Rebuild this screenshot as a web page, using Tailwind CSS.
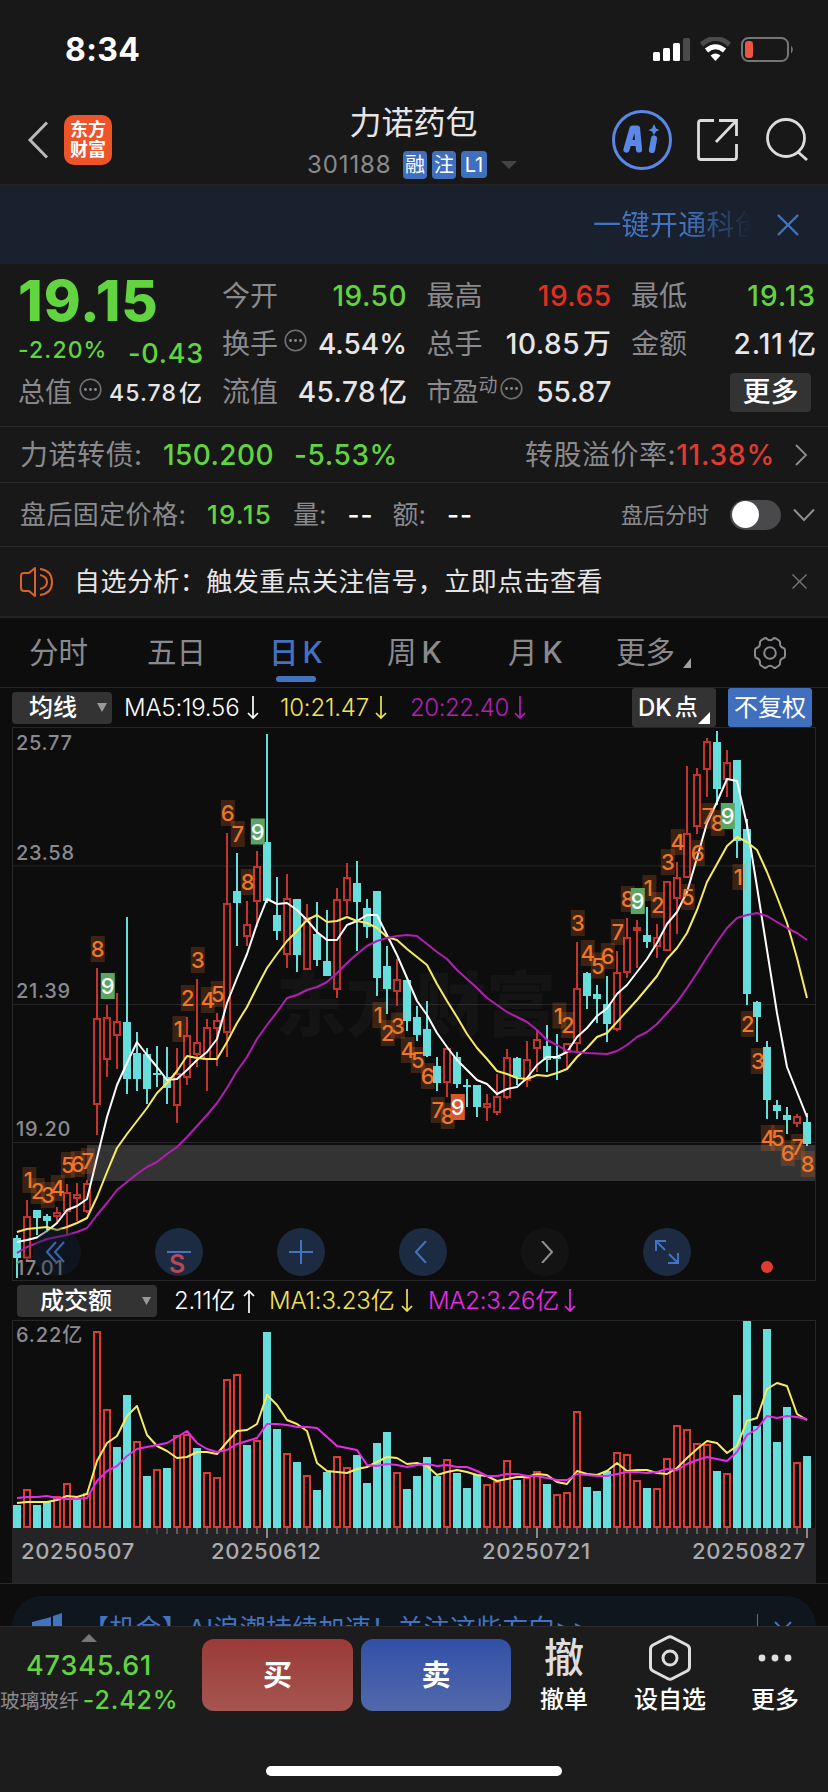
<!DOCTYPE html>
<html lang="zh-CN">
<head>
<meta charset="utf-8">
<title>力诺药包 301188</title>
<script src="https://cdn.jsdelivr.net/npm/@tailwindcss/browser@4"></script>
</head>
<body class="w-[828px] h-[1792px] overflow-hidden bg-[#0d0d0d] font-[Inter,'Noto_Sans_CJK_SC',sans-serif] leading-none text-[#e6e6e8] whitespace-nowrap">
<div class="flex h-[1792px] w-[828px] flex-col overflow-hidden">

  <!-- status bar -->
  <header class="h-[186px] shrink-0 border-b-2 border-[#242424] bg-[#181818]">
    <div class="flex h-[100px] items-center justify-between pl-[65px] pr-[33px]">
      <span class="text-[32px] font-bold tracking-[0.4px] text-white">8:34</span>
      <svg width="142" height="26" viewBox="0 0 142 26">
        <g fill="#fff"><rect x="0" y="15" width="7" height="9" rx="1.5"/><rect x="10" y="11" width="7" height="13" rx="1.5"/><rect x="20" y="6" width="7" height="18" rx="1.5"/></g>
        <rect x="30" y="1" width="7" height="23" rx="1.5" fill="#4a4a4a"/>
        <path d="M48.500 7.500Q62.500-4.500 76.500 7.500" fill="none" stroke="#4a4a4a" stroke-width="5"/>
        <path d="M53.500 13.500Q62.500 6 71.500 13.500" fill="none" stroke="#fff" stroke-width="5"/>
        <path d="M57.500 18.500Q62.500 14.500 67.500 18.500L62.500 24Z" fill="#fff"/>
        <rect x="89" y="1" width="46" height="23" rx="6.500" fill="none" stroke="#757575" stroke-width="2"/>
        <rect x="92" y="4" width="8" height="17" rx="3" fill="#eb5545"/>
        <path d="M138 8.500Q141.500 12.500 138 16.500Z" fill="#757575"/>
      </svg>
    </div>
    <!-- navigation -->
    <div class="flex h-[84px] items-start">
      <div class="flex h-[80px] w-[307px] items-center pl-[27px]">
        <svg width="22" height="38" viewBox="0 0 22 38" fill="none" stroke="#b9b9b9" stroke-width="3"><path d="M20 1.500L3 19L20 36.500"/></svg>
        <div class="ml-[15px] flex h-[50px] w-[48px] flex-col items-center justify-center gap-[2px] rounded-[10px] bg-[#ee5428] text-[18px] font-bold text-white"><span>东方</span><span>财富</span></div>
      </div>
      <div class="flex w-[213px] flex-col items-center">
        <h1 class="mt-[7px] text-[32px]">力诺药包</h1>
        <div class="mt-[12px] flex h-[28px] w-full items-center">
          <span class="w-[96px] text-[24px] tracking-[0.9px] text-[#8a8a8e]">301188</span>
          <div class="flex gap-[5px] text-[20px] text-white">
            <span class="flex h-[28px] w-[24px] items-center justify-center rounded-[4px] bg-[#4070bd]">融</span>
            <span class="flex h-[28px] w-[24px] items-center justify-center rounded-[4px] bg-[#4070bd]">注</span>
            <span class="flex h-[27px] w-[26px] items-center justify-center rounded-[4px] bg-[#4070bd]">L1</span>
          </div>
          <svg class="ml-[14px]" width="16" height="8" viewBox="0 0 16 8"><path d="M0 0H16L8 8Z" fill="#444"/></svg>
        </div>
      </div>
      <svg class="ml-[91px] mt-[9px]" width="200" height="62" viewBox="0 0 200 62" fill="none">
        <circle cx="31" cy="31" r="28.500" stroke="#5b87e6" stroke-width="3"/>
        <g fill="none" stroke="#5b87e6" stroke-width="6.200" stroke-linecap="round" stroke-linejoin="round"><path d="M15.500 40.500L21.500 19.500H26L28 40.500M18.500 34H26.500"/><path d="M43 29.500L41 41"/></g>
        <path d="M43 15L45 19.500L48.500 21L45 22.500L43 26L41 22.500L37.500 21L41 19.500Z" fill="#5b87e6"/>
        <g stroke="#dcdcdc" stroke-width="2.800"><path d="M103 11.500H90Q87.500 11.500 87.500 14V48Q87.500 50.500 90 50.500H123Q125.500 50.500 125.500 48V35"/><path d="M108 11.500H125.500V27M125 12L105 33"/><circle cx="175" cy="29" r="18.500"/><path d="M187 43L196 51"/></g>
      </svg>
    </div>
  </header>

  <!-- promotion strip -->
  <div class="flex h-[78px] shrink-0 items-center justify-end bg-[#19212f] pr-[29px]">
    <div class="w-[158px] overflow-hidden bg-linear-to-r from-[#4373be] from-60% to-[#4373be]/0 bg-clip-text text-[28px] leading-[40px] tracking-[0.4px] text-transparent">一键开通科创</div>
    <svg class="ml-[26px]" width="22" height="22" viewBox="0 0 22 22"><path d="M1 1L21 21M21 1L1 21" stroke="#4373be" stroke-width="2.400"/></svg>
  </div>

  <!-- quote summary -->
  <section class="flex h-[163px] shrink-0 border-b border-[#29292b] bg-[#181818] pt-[8px] text-[28px] font-medium">
    <div class="flex w-[222px] flex-col pl-[18px]">
      <div class="flex h-[56px] items-center pt-[1px] text-[56px] font-extrabold tracking-[1px] text-[#62d440]">19.15</div>
      <div class="flex h-[48px] items-center justify-between pr-[18px] text-[#62d440]"><span class="pb-[3px] text-[23px] tracking-[1.1px]">-2.20%</span><span class="pt-[2px] text-[27px] tracking-[0.8px]">-0.43</span></div>
      <div class="flex h-[32px] items-center"><span class="text-[27px] font-normal text-[#8a8a8e]">总值</span>
        <svg class="mb-[6px] ml-[7px]" width="23" height="23" viewBox="0 0 23 23"><circle cx="11.500" cy="11.500" r="10.300" fill="none" stroke="#707074" stroke-width="1.600"/><g fill="#8a8a8e"><circle cx="6.500" cy="11.500" r="1.400"/><circle cx="11.500" cy="11.500" r="1.400"/><circle cx="16.500" cy="11.500" r="1.400"/></g></svg>
        <span class="ml-[7px] pt-[3px] text-[23px] tracking-[1.1px]">45.78<span class="ml-[2px]">亿</span></span></div>
    </div>
    <div class="grid grid-cols-[185px_185px_185px] grid-rows-[48px_48px_48px] gap-x-[19.500px] [&>div]:flex [&>div]:items-center [&>div]:justify-between">
      <div><span class="font-normal text-[#8a8a8e]">今开</span><span class="tracking-[0.5px] text-[#62d440]">19.50</span></div>
      <div><span class="font-normal text-[#8a8a8e]">最高</span><span class="tracking-[0.5px] text-[#e0301f]">19.65</span></div>
      <div><span class="font-normal text-[#8a8a8e]">最低</span><span class="tracking-[1px] text-[#62d440]">19.13</span></div>
      <div><span class="flex items-center font-normal text-[#8a8a8e]">换手<svg class="mb-[8px] ml-[6px]" width="23" height="23" viewBox="0 0 23 23"><circle cx="11.500" cy="11.500" r="10.300" fill="none" stroke="#707074" stroke-width="1.600"/><g fill="#8a8a8e"><circle cx="6.500" cy="11.500" r="1.400"/><circle cx="11.500" cy="11.500" r="1.400"/><circle cx="16.500" cy="11.500" r="1.400"/></g></svg></span><span>4.54%</span></div>
      <div><span class="font-normal text-[#8a8a8e]">总手</span><span class="tracking-[0.5px]">10.85<span class="ml-[3px]">万</span></span></div>
      <div><span class="font-normal text-[#8a8a8e]">金额</span><span class="tracking-[1px]">2.11<span class="ml-[4px] tracking-normal">亿</span></span></div>
      <div><span class="font-normal text-[#8a8a8e]">流值</span><span class="tracking-[0.4px]">45.78<span class="ml-[3px] tracking-normal">亿</span></span></div>
      <div><span class="flex items-center font-normal text-[#8a8a8e]"><span class="text-[26px]">市盈</span><span class="mb-[14px] text-[19px]">动</span><svg class="mb-[8px] ml-[2px]" width="23" height="23" viewBox="0 0 23 23"><circle cx="11.500" cy="11.500" r="10.300" fill="none" stroke="#707074" stroke-width="1.600"/><g fill="#8a8a8e"><circle cx="6.500" cy="11.500" r="1.400"/><circle cx="11.500" cy="11.500" r="1.400"/><circle cx="16.500" cy="11.500" r="1.400"/></g></svg></span><span>55.87</span></div>
      <div><span></span><span class="mr-[5px] flex h-[39px] w-[81px] items-center justify-center rounded-[4px] bg-[#333] text-white">更多</span></div>
    </div>
  </section>

  <!-- convertible bond -->
  <div class="flex h-[56px] shrink-0 items-center border-b border-[#29292b] bg-[#181818] pl-[20px] pr-[20px] text-[28px] font-medium">
    <span class="w-[143px] font-normal tracking-[0.5px] text-[#8a8a8e]">力诺转债:</span><span class="w-[131px] text-[#62d440] tracking-[0.4px]">150.200</span><span class="text-[#62d440] tracking-[0.6px]">-5.53%</span>
    <span class="ml-auto font-normal tracking-[0.5px] text-[#8a8a8e]">转股溢价率:</span><span class="tracking-[0.8px] text-[#e03b30]">11.38%</span>
    <svg class="ml-[19px]" width="14" height="22" viewBox="0 0 14 22"><path d="M2 1L12 11L2 21" fill="none" stroke="#8e8e92" stroke-width="1.800"/></svg>
  </div>

  <!-- after-hours fixed price -->
  <div class="flex h-[64px] shrink-0 items-center border-b border-[#29292b] bg-[#181818] pl-[20px] pr-[13px] text-[26px] font-medium">
    <span class="w-[187px] font-normal tracking-[0.4px] text-[#8a8a8e]">盘后固定价格:</span><span class="w-[86px] tracking-[1.200px] text-[#62d440]">19.15</span>
    <span class="font-normal text-[#8a8a8e]">量:</span><span class="ml-[21px] tracking-[1px] text-white">--</span>
    <span class="ml-[19px] font-normal text-[#8a8a8e]">额:</span><span class="ml-[21px] tracking-[1px] text-white">--</span>
    <span class="ml-auto text-[22px] font-normal text-[#8a8a8e]">盘后分时</span>
    <span class="ml-[21px] flex h-[30px] w-[51px] items-center rounded-full bg-[#49494b] pl-[2px]"><span class="size-[27px] rounded-full bg-white"></span></span>
    <svg class="ml-[12px]" width="22" height="14" viewBox="0 0 22 14"><path d="M1 1.500L11 12L21 1.500" fill="none" stroke="#8e8e92" stroke-width="2"/></svg>
  </div>

  <!-- watchlist analysis notice -->
  <div class="flex h-[71px] shrink-0 items-center border-b-2 border-[#242426] bg-[#181818] pl-[19px] pr-[20px] text-[26px]">
    <svg width="36" height="30" viewBox="0 0 36 30" fill="none" stroke="#d9622b" stroke-width="2"><path d="M16 1V29L10 24H5Q2 24 2 21V9Q2 6 5 6H10Z" stroke-linejoin="round"/><path d="M21 8Q28 9.500 28 15Q28 20.500 21 22M21 2Q33 3.500 33 15Q33 26.500 21 28"/></svg>
    <span class="ml-[19px] tracking-[0.45px]">自选分析：触发重点关注信号，立即点击查看</span>
    <svg class="ml-auto mr-[1px]" width="15" height="15" viewBox="0 0 15 15"><path d="M.500.500L14.500 14.500M14.500.500L.500 14.500" stroke="#777" stroke-width="1.400"/></svg>
  </div>

  <!-- period tabs -->
  <nav class="flex h-[70px] shrink-0 items-start border-b border-[#262626] pl-[29px] text-[29.500px] text-[#8a8a8e]">
    <span class="w-[118px] pt-[20px]">分时</span><span class="w-[122px] pt-[20px]">五日</span>
    <span class="flex w-[118px] flex-col items-start pt-[20px] font-medium text-[#4373be]"><span>日<span class="ml-[4px]">K</span></span><span class="ml-[7px] mt-[8px] h-[6px] w-[40px] rounded-full bg-[#4373be]"></span></span>
    <span class="w-[121px] pt-[20px]">周<span class="ml-[5px] font-medium">K</span></span><span class="w-[108px] pt-[20px]">月<span class="ml-[5px] font-medium">K</span></span>
    <span class="w-[59px] pt-[20px]">更多</span>
    <svg class="ml-[8px] mt-[40px]" width="8" height="10"><path d="M8 0V10H0Z" fill="#a0a0a0"/></svg>
    <svg class="ml-[62px] mt-[18px]" width="34" height="34" viewBox="0 0 34 34" fill="none" stroke="#8a8a8e" stroke-width="2"><path d="M11 2.500Q13 1.500 14 3Q17 5.500 20 3Q21 1.500 23 2.500L26 4.500Q27.500 6 27 7.500Q27 11 30.500 12Q32 12.500 32 14.500V19.500Q32 21.500 30.500 22Q27 23 27 26.500Q27.500 28 26 29.500L23 31.500Q21 32.500 20 31Q17 28.500 14 31Q13 32.500 11 31.500L8 29.500Q6.500 28 7 26.500Q7 23 3.500 22Q2 21.500 2 19.500V14.500Q2 12.500 3.500 12Q7 11 7 7.500Q6.500 6 8 4.500Z"/><circle cx="17" cy="17" r="5.800"/></svg>
  </nav>

  <!-- moving-average legend -->
  <div class="flex h-[39px] shrink-0 items-center pl-[12px] pr-[16px] text-[24px]">
    <span class="flex h-[32px] w-[100px] items-center rounded-[4px] bg-[#333] pl-[17px] font-medium text-white">均线<svg class="ml-[20px]" width="10" height="9"><path d="M0 0H10L5 9Z" fill="#999"/></svg></span>
    <span class="ml-[12px] flex w-[156px] items-center text-white"><span class="w-[123px] font-[350] tracking-[-0.2px]">MA5:19.56</span><svg width="12" height="24" viewBox="0 0 12 24" fill="none" stroke="currentColor" stroke-width="1.700"><path d="M6 0V22M1 17L6 22L11 17"/></svg></span>
    <span class="flex w-[130px] items-center text-[#efe259]"><span class="w-[95px] font-[350] tracking-[-0.2px]">10:21.47</span><svg width="12" height="24" viewBox="0 0 12 24" fill="none" stroke="currentColor" stroke-width="1.700"><path d="M6 0V22M1 17L6 22L11 17"/></svg></span>
    <span class="flex items-center text-[#b21fb4]"><span class="w-[104px] font-[350] tracking-[-0.45px]">20:22.40</span><svg width="12" height="24" viewBox="0 0 12 24" fill="none" stroke="currentColor" stroke-width="1.700"><path d="M6 0V22M1 17L6 22L11 17"/></svg></span>
    <span class="ml-auto flex h-[39px] w-[84px] items-center rounded-[3px] bg-[#333] pl-[6px] font-medium text-white">DK<span class="ml-[3px] text-[23px]">点</span><svg class="mt-[21px]" width="12" height="12"><path d="M12 0V12H0Z" fill="#fff"/></svg></span>
    <span class="ml-[12px] flex h-[39px] w-[84px] items-center justify-center rounded-[3px] bg-[#4070bd] text-white">不复权</span>
  </div>

  <!-- candlestick chart, tool buttons lie over it -->
  <div class="relative h-[554px] shrink-0">
    <svg id="kline" class="block" width="828" height="554" viewBox="0 727 828 554"></svg>
    <div class="absolute left-[33px] top-[501px] flex gap-[74px]">
      <span class="flex size-[48px] items-center justify-center rounded-full bg-[#14233a]/40"><svg class="mr-[3px]" width="20" height="22" viewBox="0 0 20 22" fill="none" stroke="#3a66ab" stroke-width="2"><path d="M10 1L1 11L10 21M18 1L9 11L18 21"/></svg></span>
      <span class="flex size-[48px] items-center justify-center rounded-full bg-[#1c2a42]"><span class="h-[2px] w-[24px] bg-[#4373be]"></span></span>
      <span class="flex size-[48px] items-center justify-center rounded-full bg-[#1c2a42]"><svg width="24" height="24" stroke="#4373be" stroke-width="2"><path d="M12 0V24M0 12H24"/></svg></span>
      <span class="flex size-[48px] items-center justify-center rounded-full bg-[#1c2a42]"><svg class="mr-[4px]" width="12" height="22" fill="none" stroke="#4373be" stroke-width="2"><path d="M11 0L1 11L11 22"/></svg></span>
      <span class="flex size-[48px] items-center justify-center rounded-full bg-[#131313]"><svg class="ml-[3px]" width="12" height="22" fill="none" stroke="#8e8e92" stroke-width="2"><path d="M1 0L11 11L1 22"/></svg></span>
      <span class="flex size-[48px] items-center justify-center rounded-full bg-[#1c2a42]"><svg width="24" height="24" fill="none" stroke="#4373be" stroke-width="2"><path d="M1 11V1H11M1 1L10 10M23 13V23H13M23 23L14 14"/></svg></span>
    </div>
    <span class="absolute left-[169px] top-[525px] text-[25px] font-semibold text-[#b84a58]">S</span>
    <span class="absolute left-[761px] top-[534px] size-[12px] rounded-full bg-[#e03b30]"></span>
  </div>

  <!-- turnover legend -->
  <div class="flex h-[39px] shrink-0 items-center pl-[17px] text-[24px]">
    <span class="flex h-[32px] w-[140px] items-center rounded-[4px] bg-[#333] pl-[23px] font-medium text-white">成交额<svg class="ml-[30px]" width="9" height="8"><path d="M0 0H9L4.500 8Z" fill="#999"/></svg></span>
    <span class="ml-[17px] flex w-[95px] items-center text-white"><span class="w-[69px] font-[350] tracking-[-0.2px]">2.11亿</span><svg width="12" height="24" viewBox="0 0 12 24" fill="none" stroke="currentColor" stroke-width="1.700"><path d="M6 24V2M1 7L6 2L11 7"/></svg></span>
    <span class="flex w-[159px] items-center text-[#efe259]"><span class="w-[132px] font-[350] tracking-[-0.2px]">MA1:3.23亿</span><svg width="12" height="24" viewBox="0 0 12 24" fill="none" stroke="currentColor" stroke-width="1.700"><path d="M6 0V22M1 17L6 22L11 17"/></svg></span>
    <span class="flex items-center text-[#e52be8]"><span class="w-[136px] font-[350] tracking-[-0.25px]">MA2:3.26亿</span><svg width="12" height="24" viewBox="0 0 12 24" fill="none" stroke="currentColor" stroke-width="1.700"><path d="M6 0V22M1 17L6 22L11 17"/></svg></span>
  </div>
  <svg id="vol" class="block shrink-0" width="828" height="264" viewBox="0 1320 828 264"></svg>

  <!-- AI hint card, cut off by the toolbar -->
  <div class="h-[42px] shrink-0 overflow-hidden px-[12px] pt-[12px]">
    <div class="flex h-[60px] items-center rounded-[30px] bg-[#10161e] pl-[20px] pr-[24px] text-[26px] text-[#4373be]">
      <svg width="32" height="26" viewBox="0 0 32 26" fill="#4373be"><path d="M0 9L19 4V22L0 18ZM21 3L30 0V26L21 23Z"/></svg>
      <span class="ml-[19px] pt-[5px] tracking-[0.25px]">【机会】AI浪潮持续加速！关注这些方向&gt;&gt;</span>
      <span class="ml-auto h-[24px] w-px bg-[#4373be]"></span>
      <svg class="ml-[16px]" width="18" height="14" viewBox="0 0 18 14"><path d="M1 3L9 11L17 3" fill="none" stroke="#4373be" stroke-width="2"/></svg>
    </div>
  </div>

  <!-- trading toolbar -->
  <footer class="flex h-[166px] shrink-0 flex-col items-center border-t border-[#2a2a2a] bg-[#1c1c1c]">
    <div class="flex h-[139px] w-full items-start">
      <div class="flex w-[202px] flex-col">
        <svg class="ml-[81px] mt-[7px]" width="16" height="8"><path d="M0 8H16L8 0Z" fill="#777"/></svg>
        <div class="mt-[10px] pl-[26px] text-[27px] font-medium tracking-[0.9px] text-[#62d440]">47345.61</div>
        <div class="mt-[9px] flex items-center"><span class="pt-[3px] text-[19.700px] text-[#8a8a8e]">玻璃玻纤</span><span class="ml-[4px] text-[25px] font-medium tracking-[0.9px] text-[#62d440]">-2.42%</span></div>
      </div>
      <div class="mt-[12px] flex h-[72px] w-[151px] items-center justify-center rounded-[12px] bg-linear-to-b from-[#9b3a36] to-[#a55551] text-[29px] font-bold text-white">买</div>
      <div class="ml-[8px] mt-[12px] flex h-[72px] w-[150px] items-center justify-center rounded-[12px] bg-linear-to-b from-[#3350a8] to-[#5168aa] text-[29px] font-bold text-white">卖</div>
      <div class="mt-[11px] ml-[18px] flex w-[70px] flex-col items-center text-[24px] text-white"><span class="flex h-[40px] items-center text-[40px] font-medium text-[#dedede]">撤</span><span class="mt-[10px] font-medium">撤单</span></div>
      <div class="mt-[8px] ml-[26px] flex w-[90px] flex-col items-center text-[24px] text-white"><svg width="44" height="46" viewBox="0 0 44 46" fill="none" stroke="#dedede" stroke-width="3"><path d="M19.500 2.500Q22 1 24.500 2.500L39 10Q41.500 11.500 41.500 14V32Q41.500 34.500 39 36L24.500 43.500Q22 45 19.500 43.500L5 36Q2.500 34.500 2.500 32V14Q2.500 11.500 5 10Z"/><circle cx="22" cy="23" r="7"/></svg><span class="mt-[7px] font-medium">设自选</span></div>
      <div class="mt-[27px] ml-[30px] flex w-[60px] flex-col items-center text-[24px] text-white"><svg width="34" height="8" fill="#dedede"><circle cx="4" cy="4" r="3.400"/><circle cx="17" cy="4" r="3.400"/><circle cx="30" cy="4" r="3.400"/></svg><span class="mt-[26px] font-medium">更多</span></div>
    </div>
    <div class="h-[10px] w-[296px] rounded-full bg-white"></div>
  </footer>
</div>

<script>
const RED = '#c5342a', CYAN = '#68dedc';
const X = i => 17 + 10 * i;
// each candle: direction (u/d), high, body top, body bottom, low
const candles = `d1235,1238,1258,1278 u1200,1216,1258.5,1262 d1210,1210,1218,1235 d1214,1216,1221,1232 u1207,1212,1217,1224 u1184,1192,1212,1234 u1183,1194,1199,1221 u1180,1183,1212,1213 u968,1018,1105,1135 u1005,1017,1060,1077
u993,1021,1036,1069 d917,1022,1079,1094 d1032,1053,1079,1091 d1048,1054,1089,1104 d1046,1073,1075,1087 d1047,1077,1088,1104 u1048,1073,1106,1123 u1017,1035,1078,1085 u979,1042,1055,1067 u1019,1027,1060,1091
u1013,1020,1029,1066 u833,903,1033,1057 d853,891,903,946 u901,924,937,946 u851,866,902,927 d734,842,901,903 d877,915,931,940 u874,898,955,968 d899,899,955,972 u904,917,970,970
d902,934,960,966 d910,961,976,976 u888,899,990,998 u863,877,901,915 d861,883,902,951 d899,908,927,938 d891,891,978,996 d946,966,989,1014 u959,979,992,1006 d980,980,1021,1031
d1006,1017,1035,1041 d1001,1029,1056,1057 d1057,1066,1083,1091 u1048,1048,1083,1097 d1052,1057,1084,1088 d1079,1085,1087,1107 d1085,1085,1107,1117 u1094,1103,1108,1121 u1074,1096,1113,1115 u1049,1057,1098,1099
d1057,1058,1077,1085 u1041,1059,1081,1087 u1029,1039,1049,1072 d1025,1046,1060,1072 d1034,1057,1059,1080 u1043,1043,1053,1068 u942,988,1044,1052 d972,973,996,1009 d985,994,999,1023 d976,1004,1024,1042
u951,972,1030,1031 u918,937,973,978 u920,927,931,968 d907,935,942,948 u924,937,947,958 u881,881,951,951 u862,877,899,934 u766,833,878,878 u768,774,827,834 u738,741,770,797
d731,742,789,805 u750,762,780,797 d760,760,841,858 d819,829,994,1005 d1001,1002,1017,1042 d1041,1047,1100,1119 d1100,1105,1111,1119 d1107,1115,1120,1134 u1114,1116,1124,1127 d1113,1122,1144,1146`.split(/\s+/);
const ma5 = [1242,1240,1237.5,1231,1223,1210,1206,1199,1158,1117,1085,1063,1042,1055,1067,1080,1079,1070,1060,1052,1039,1003,978,954,924,899,904,903,910,920,932,940,940,925,921,915,915,935,955,978,1001,1015,1033,1047,1060,1070,1080,1084,1094,1089,1087,1078,1065,1057,1057,1052,1037,1028,1016,1008.5,994,985,972,959,943,924,912,892,858,823,802,779,781,825,887,950,1013,1067,1092,1117];
const ma10 = [1232,1229,1228,1227,1230,1227,1223,1218,1197,1172,1148,1134,1121,1108,1093,1083,1071,1056,1058,1059,1059,1042,1023,1007,987,968,954,941,931,920,915,922,921,917,921,923,928,937,940,949,957,965,984,1001,1017,1034,1048,1059,1071,1074,1078,1079,1075,1076,1073,1069,1057,1048,1037,1033,1022,1011,1000,988,976,959,948,933,910,882,864,846,837,842,850,872,897,923,958,998];
const ma20 = [1253,1247,1243,1239,1237,1235,1232,1228,1215,1203,1190,1182,1174,1167,1162,1154,1147,1137,1126,1115,1103,1088,1071,1057,1039,1025,1012,998,995,990,987,982,973,963,954,946,941,938,936,935,936,944,952,959,970,979,988,998,1005,1012,1017,1022,1030,1040,1045,1051,1052,1053,1053.5,1054,1051,1045,1037,1032,1024,1013,1002,988,973,957,942,928,918,915,913,916,922,928,933,940];
// sequence marks: candle index, digit, centre y; nines have a solid background
const marks = [[1,1,1180],[2,2,1191],[3,3,1195],[4,4,1188],[5,5,1165],[6,6,1164],[7,7,1161],[8,8,949],[9,9,986],[16,1,1029],[17,2,998],[18,3,960],[19,4,1000],[20,5,994],[21,6,813],[22,7,834],[23,8,882],[24,9,831.5],[36,1,1015],[37,2,1033],[38,3,1025.5],[39,4,1050],[40,5,1060],[41,6,1076],[42,7,1110],[43,8,1116],[44,9,1107],[54,1,1015.5],[55,2,1025],[56,3,923],[57,4,953],[58,5,965.5],[59,6,956],[60,7,932],[61,8,899],[62,9,901],[63,1,888],[64,2,905],[65,3,862],[66,4,842],[67,5,897],[68,6,853],[69,7,816],[70,8,823],[71,9,816],[72,1,877],[73,2,1024],[74,3,1061],[75,4,1138],[76,5,1138],[77,6,1153],[78,7,1147],[79,8,1164]];
const volumes = 'd1505 u1489 d1505 d1501 u1496 u1483 d1498 u1493 u1331 u1409 d1447 d1395 u1441 d1476 u1469 d1468 u1435 u1434 d1448 u1472 u1477 u1379 u1374 d1445 u1440 d1332 d1429 u1453 d1462 u1475 d1490 d1472 u1456 u1467 d1455 d1483 d1443 d1432 u1472 d1489 d1476 d1457 d1476 u1459 d1473 d1488 d1475 u1484 u1481 u1460 d1480 u1477 u1471 d1484 u1494 u1492 u1411 d1487 d1491 d1471 u1452 u1454 u1480 d1488 u1488 u1458 u1425 u1429 u1443 u1444 d1471 u1473 d1395 d1321 d1426 d1329 d1442 d1407 u1462 d1456'.split(' ');
const vma1 = [1503,1502,1502,1502,1500,1496,1497,1494,1461,1443,1436,1416,1406,1435,1446,1451,1458,1457,1452,1452,1454,1442,1431,1430,1424,1395,1405,1420,1424,1431,1463,1471,1472,1473,1469,1467,1462,1457,1458,1464,1463,1466,1475,1472,1470,1472,1475,1476,1481,1479,1477,1477,1474,1475,1482,1484,1471,1474,1475,1471,1463,1471,1470,1470,1473,1474,1468,1458,1449,1441,1443,1453,1446,1421,1418,1389,1383,1386,1414,1420];
const vma2 = [1498,1497,1497,1496,1498,1499,1499,1498,1481,1471,1466,1456,1449,1447,1445,1443,1437,1431,1443,1449,1452,1450,1444,1441,1438,1424,1424,1425,1427,1427,1428,1437,1446,1448,1450,1465,1466,1464,1465,1467,1465,1464,1466,1465,1467,1467,1471,1476,1476,1474,1474,1476,1476,1478,1480,1480,1474,1475,1476,1476,1474,1472,1472,1473,1472,1469,1470,1464,1460,1457,1459,1461,1452,1435,1429,1416,1418,1416,1417,1419];
const line = (a, c) => `<polyline fill="none" stroke="${c}" stroke-width="2" stroke-linejoin="round" points="${a.map((y, i) => X(i) + ',' + y).join(' ')}"/>`;
const label = (x, y, t, c, s, w, ls) => `<text x="${x}" y="${y + s * .364}" fill="${c}" font-size="${s}" font-weight="${w}" letter-spacing="${ls}">${t}</text>`;
const frame = '#262628';

let k = `<g fill="${frame}"><rect x="12" y="865.500" width="803" height="1"/><rect x="12" y="1004" width="803" height="1"/><rect x="12" y="1142" width="803" height="1"/></g>
<rect x="12.500" y="727.500" width="803" height="553" fill="none" stroke="${frame}"/>
<text x="276" y="1031" font-size="70" font-weight="900" fill="#fff" fill-opacity=".033">东方财富</text>
<rect x="87" y="1145" width="728" height="36" fill="#333"/>`;
candles.forEach((s, i) => {
  const [h, t, b, l] = s.slice(1).split(',').map(Number), x = X(i);
  k += s[0] === 'd'
    ? `<path fill="${CYAN}" d="M${x - 1} ${h}h2V${l}h-2ZM${x - 4} ${t}h8V${b}h-8Z"/>`
    : `<path fill="${RED}" d="M${x - 1} ${h}h2V${t}h-2ZM${x - 1} ${b}h2V${l}h-2Z"/><rect x="${x - 3}" y="${t + 1}" width="6" height="${b - t - 2}" fill="none" stroke="${RED}" stroke-width="2"/>`;
});
k += line(ma5, '#fff') + line(ma10, '#f6ec62') + line(ma20, '#b01fb2');
for (const [i, n, y] of marks) {
  const x = X(i) + (n === 1 ? 2.4 : .8), nine = n === 9;
  k += `<rect x="${x - 7}" y="${y - 13}" width="14" height="26" fill="${nine ? (i === 44 ? '#d9582b' : '#5aa765') : '#f57a28'}" fill-opacity="${nine ? 1 : .2}"/><text x="${X(i) + .8 + (n === 1 ? .5 : 0)}" y="${y + 8}" text-anchor="middle" font-size="22" font-weight="500" fill="${nine ? '#fff' : '#f0762c'}">${n}</text>`;
}
[['25.77', 743], ['23.58', 853], ['21.39', 991], ['19.20', 1129], ['17.01', 1268]].forEach(([t, y]) => k += label(16, y, t, '#8a8a8e', 20, 500, .7));
document.getElementById('kline').innerHTML = k;

let v = `<rect x="12.500" y="1320.500" width="803" height="220" fill="none" stroke="${frame}"/><rect x="12" y="1528" width="804" height="55" fill="#242426"/><rect x="0" y="1583" width="828" height="1" fill="#2a2a2c"/>`;
volumes.forEach((s, i) => {
  const y = +s.slice(1), x = X(i);
  v += s[0] === 'd' ? `<rect x="${x - 4}" y="${y}" width="8" height="${1528 - y}" fill="${CYAN}"/>` : `<rect x="${x - 3}" y="${y + 1}" width="6" height="${1526 - y}" fill="none" stroke="#e03b30" stroke-width="2"/>`;
  const major = i === 25 || i === 52 || i === 79;
  if (i > 12) v += `<rect x="${x - 1}" y="1528" width="2" height="${major ? 10 : 6}" fill="${major ? '#8a8a8a' : '#5c5c5e'}" fill-opacity="${Math.min(1, (i - 12) / 4)}"/>`;
});
v += line(vma1, '#f6ec62') + line(vma2, '#e52be8') + label(16, 1334.5, '6.22亿', '#8a8a8e', 20, 500, .9);
[[21, '20250507'], [211, '20250612'], [482, '20250721'], [692, '20250827']].forEach(([x, t]) => v += label(x, 1551, t, '#acacae', 22, 500, .6));
document.getElementById('vol').innerHTML = v;
</script>
</body>
</html>
